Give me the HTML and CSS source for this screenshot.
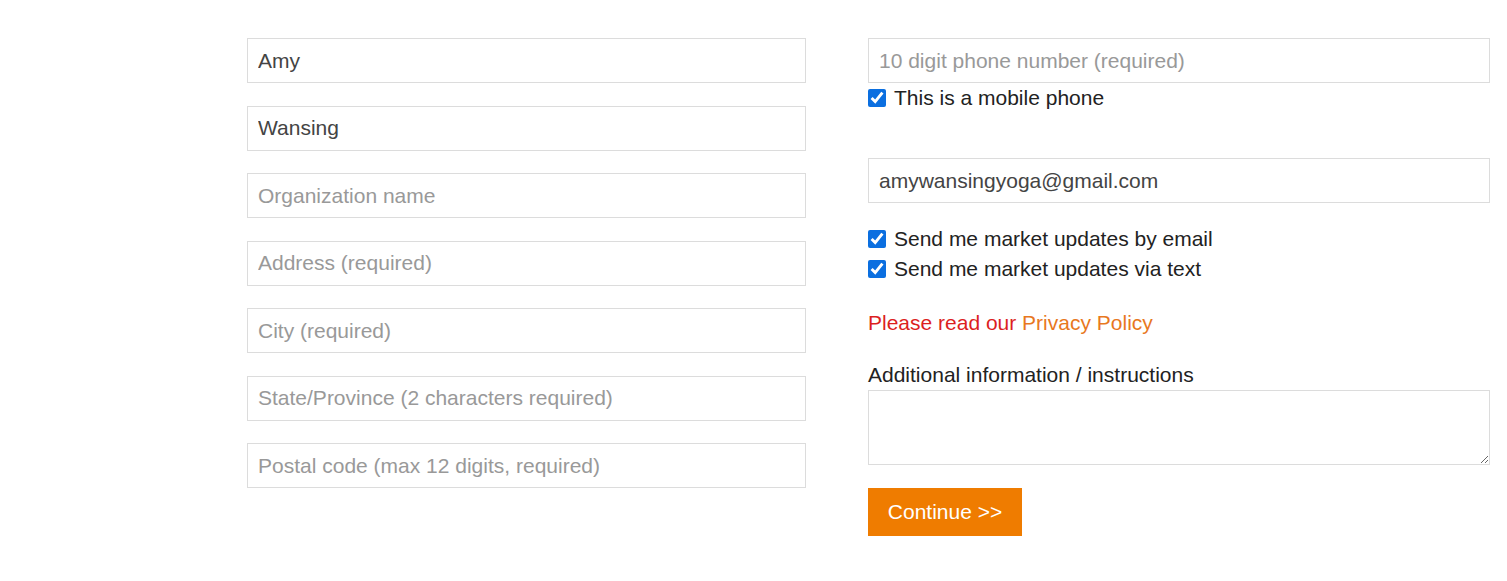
FILE: index.html
```html
<!DOCTYPE html>
<html>
<head>
<meta charset="utf-8">
<link rel="stylesheet" href="styles.css">
</head>
<body>
<div class="form">
  <div class="col left">
    <input class="field" type="text" value="Amy">
    <input class="field" type="text" value="Wansing">
    <input class="field" type="text" placeholder="Organization name">
    <input class="field" type="text" placeholder="Address (required)">
    <input class="field" type="text" placeholder="City (required)">
    <input class="field" type="text" placeholder="State/Province (2 characters required)">
    <input class="field" type="text" placeholder="Postal code (max 12 digits, required)">
  </div>
  <div class="col right">
    <input class="field" type="text" placeholder="10 digit phone number (required)">
    <label class="check mobile"><input type="checkbox" checked><span>This is a mobile phone</span></label>
    <input class="field email" type="text" value="amywansingyoga@gmail.com">
    <div class="checks">
      <label class="check"><input type="checkbox" checked><span>Send me market updates by email</span></label>
      <label class="check"><input type="checkbox" checked><span>Send me market updates via text</span></label>
    </div>
    <p class="privacy">Please read our <a href="#">Privacy Policy</a></p>
    <label class="notes-label" for="notes">Additional information / instructions</label>
    <textarea id="notes" class="notes"></textarea>
    <div><button class="continue" type="button">Continue &gt;&gt;</button></div>
  </div>
</div>
</body>
</html>
```

FILE: styles.css
```css
html, body {
  margin: 0;
  padding: 0;
  background: #fff;
}
body {
  font-family: "Liberation Sans", Arial, sans-serif;
  font-size: 21px;
  color: #222;
}
.form {
  display: flex;
  gap: 62px;
  padding: 38px 0 0 247px;
}
.col {
  display: flex;
  flex-direction: column;
}
.left {
  width: 559px;
  gap: 22.5px;
}
.right {
  width: 622px;
}
.field {
  box-sizing: border-box;
  height: 45px;
  width: 100%;
  margin: 0;
  border: 1px solid #dcdcdc;
  padding: 0 10px;
  font-family: inherit;
  font-size: 21px;
  color: #444;
  background: #fff;
  outline: none;
}
.field::placeholder {
  color: #999;
}
.check {
  display: flex;
  align-items: center;
  gap: 8px;
  height: 30px;
  color: #222;
}
.check input {
  width: 18px;
  height: 18px;
  margin: 0;
  accent-color: #0b6fe0;
}
.email {
  margin-top: 45px;
}
.checks {
  margin-top: 21px;
  display: flex;
  flex-direction: column;
}
.privacy {
  margin: 24px 0 0;
  line-height: 30px;
  color: #dc1f1f;
}
.privacy a {
  color: #e8781e;
  text-decoration: none;
}
.notes-label {
  margin-top: 22px;
  line-height: 30px;
  display: block;
}
.notes {
  box-sizing: border-box;
  width: 100%;
  height: 75px;
  margin: 0;
  border: 1px solid #dcdcdc;
  font-family: inherit;
  font-size: 21px;
}
.continue {
  margin-top: 23px;
  width: 154px;
  height: 48px;
  border: none;
  background: #ef7c00;
  color: #fff;
  font-family: inherit;
  font-size: 21px;
  padding: 0;
}
```
